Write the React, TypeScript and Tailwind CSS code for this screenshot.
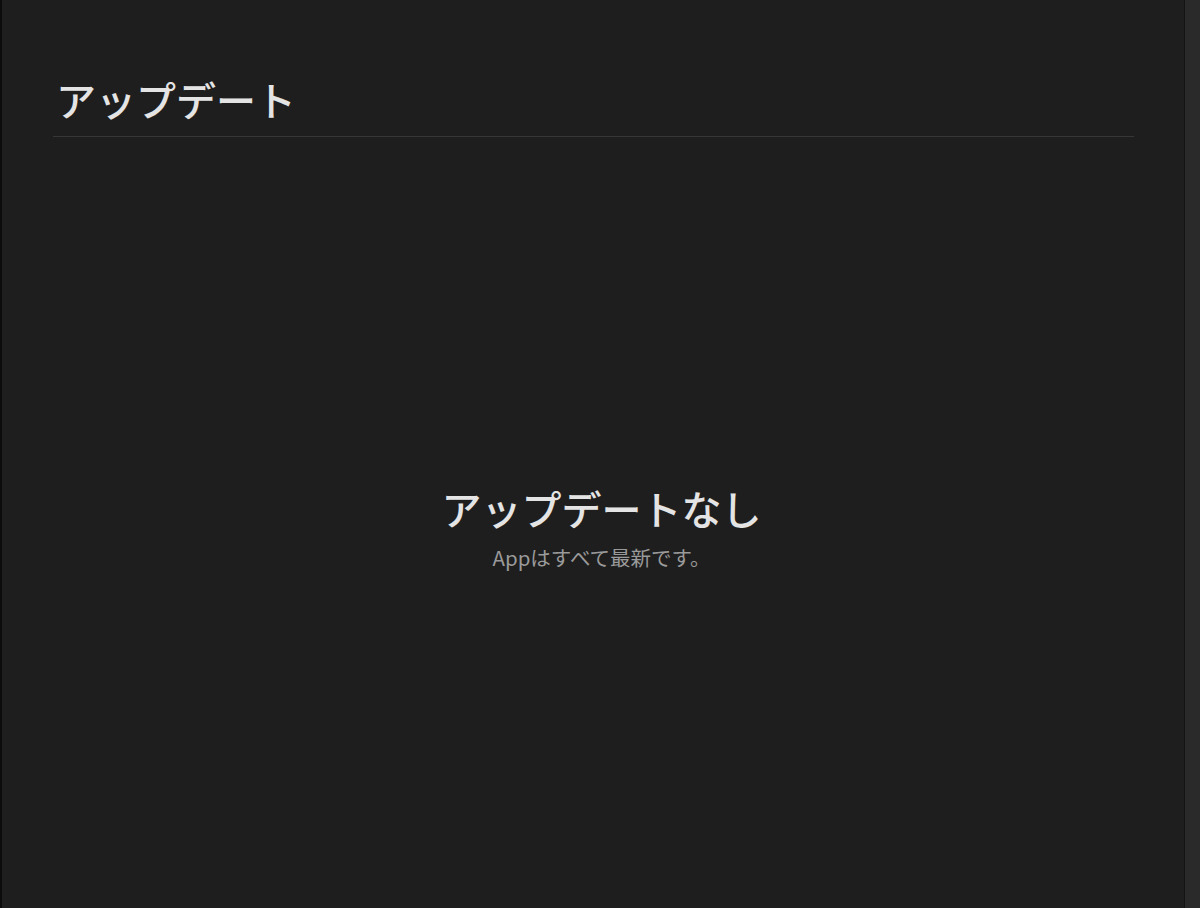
export default function App() {
  return (
    <div
      className="flex h-[908px] w-[1200px] overflow-hidden bg-[#1e1e1e]"
      style={{ fontFamily: '"Noto Sans CJK JP", "Noto Sans", sans-serif' }}
    >
      <div className="w-[2px] shrink-0 bg-[#0c0c0c]" />
      <main className="flex min-w-0 flex-1 flex-col">
        <header className="ml-[51px] mr-[50px] mt-[74px] border-b border-[#363636] pb-[12px]">
          <h1 className="pl-[3px] text-[40px] font-medium leading-[50px] text-[#e4e4e4]">アップデート</h1>
        </header>
        <section className="flex flex-1 flex-col items-center justify-center pl-[17px] pt-[8px]">
          <h2 className="text-[40px] font-medium leading-[50px] text-[#e4e4e4]">アップデートなし</h2>
          <p className="mt-[11px] text-[20.5px] leading-[26px] text-[#9a9a9a]">Appはすべて最新です。</p>
        </section>
      </main>
      <div className="w-[16px] shrink-0 border-l border-[#141414] bg-[#2a2a2a]" />
    </div>
  );
}
